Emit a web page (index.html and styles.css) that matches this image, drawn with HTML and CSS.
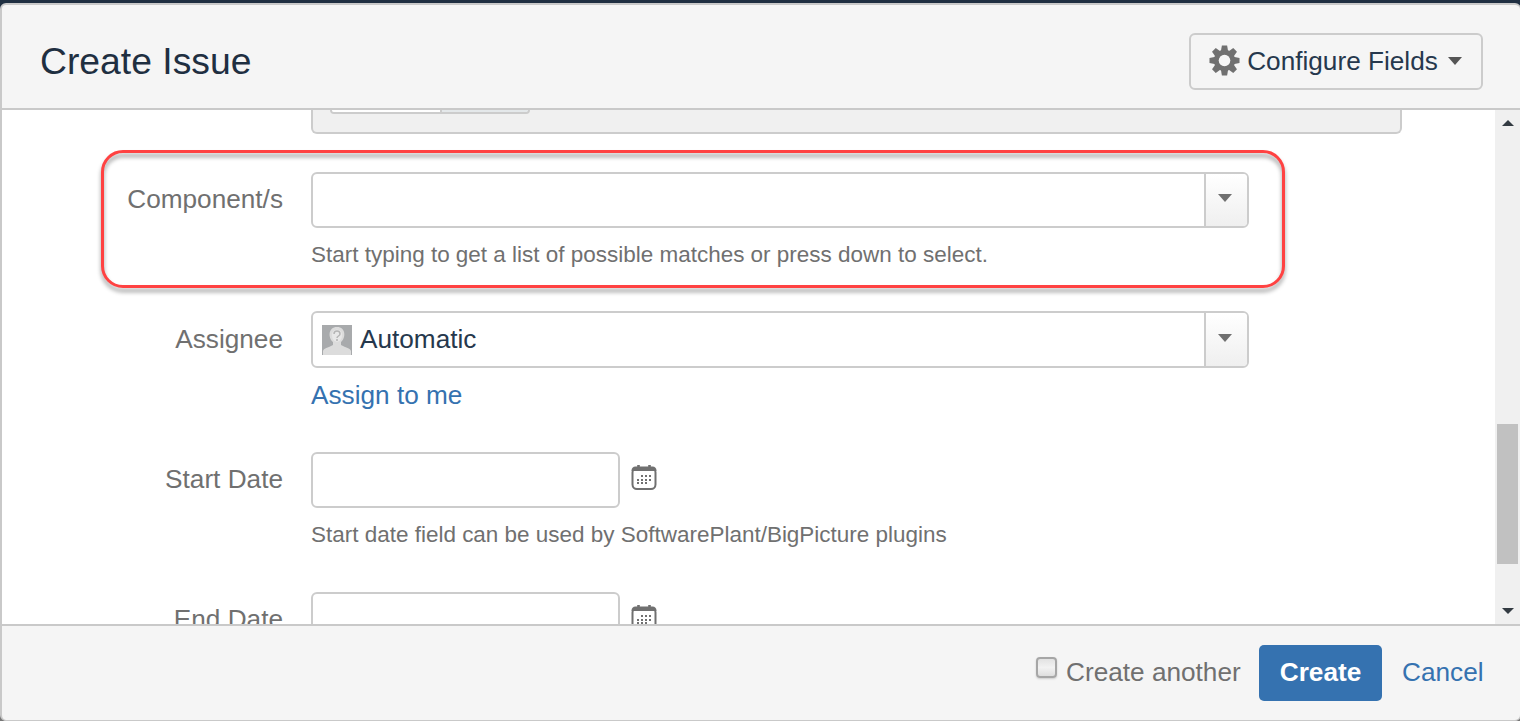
FILE: index.html
```html
<!DOCTYPE html>
<html lang="en">
<head>
<meta charset="utf-8">
<title>Create Issue</title>
<link rel="stylesheet" href="styles.css">
</head>
<body>
<svg class="defs" aria-hidden="true">
  <symbol id="calendar" viewBox="0 0 26 26">
    <path d="M7.500 0v4M18.500 0v4" stroke="#707070" stroke-width="2.600"/>
    <rect x="1.500" y="3" width="23" height="21" rx="4.500" fill="#fff" stroke="#707070" stroke-width="2"/>
    <path d="M.5 6c0-3 1.500-4.500 4-4.500h17c2.500 0 4 1.500 4 4.500z" fill="#707070"/>
    <path d="M10 11h10M6 15h14M6 18h10" stroke="#707070" stroke-width="2" stroke-dasharray="2 2"/>
  </symbol>
</svg>
<main class="dialog">
  <header class="dialog-header">
    <h1 class="title">Create Issue</h1>
    <button class="configure">
      <svg class="gear" viewBox="-16 -16 32 32">
        <g fill="#707070">
          <path id="teeth" d="M-3.800-9-2.700-15.500h5.400L3.800-9V9L2.700 15.500h-5.400L-3.800 9z"/>
          <use href="#teeth" transform="rotate(45)"/>
          <use href="#teeth" transform="rotate(90)"/>
          <use href="#teeth" transform="rotate(135)"/>
          <circle r="11"/>
        </g>
        <circle r="6" fill="#f5f5f5"/>
      </svg>
      <span class="configure-text">Configure Fields</span>
      <svg class="caret" viewBox="0 0 14 8"><path d="M0 0h14L7 8z" fill="#555"/></svg>
    </button>
  </header>
  <section class="dialog-body">
    <form class="fields">
      <div class="panel"><div class="tabs"><span class="tab active"></span><span class="tab"></span></div></div>
      <div class="row">
        <label class="label">Component/s</label>
        <div class="control">
          <div class="select"><span class="value"></span><span class="drop"><svg class="caret" viewBox="0 0 14 8"><path d="M0 0h14L7 8z" fill="#707070"/></svg></span></div>
          <p class="hint components-hint">Start typing to get a list of possible matches or press down to select.</p>
        </div>
        <div class="highlight"></div>
      </div>
      <div class="row">
        <label class="label">Assignee</label>
        <div class="control">
          <div class="select assignee-select"><span class="value">
            <svg class="avatar" viewBox="0 0 30 30">
              <rect width="30" height="30" fill="#a8aaac"/>
              <path d="M1 30v-4c1-3 4-3 8-5l2-1V17C6 13 6 2 15 2s9 11 4 15v3l2 1c4 2 7 2 8 5v4z" fill="#dcdcdc"/>
              <path d="M10 10c0-7 10-7 10 0 0 9-10 9-10 0z" fill="#e8e8e8"/>
              <path d="M12 9c0-4 6-4 6 0 0 2-3 2-3 4m0 1v2" fill="none" stroke="#b5b5b5" stroke-width="1.500"/>
            </svg>
            <span class="automatic">Automatic</span></span><span class="drop"><svg class="caret" viewBox="0 0 14 8"><path d="M0 0h14L7 8z" fill="#707070"/></svg></span></div>
          <a class="link assign">Assign to me</a>
        </div>
      </div>
      <div class="row">
        <label class="label">Start Date</label>
        <div class="control">
          <div class="date"><span class="input"></span><svg class="calendar"><use href="#calendar"/></svg></div>
          <p class="hint date-hint">Start date field can be used by SoftwarePlant/BigPicture plugins</p>
        </div>
      </div>
      <div class="row">
        <label class="label">End Date</label>
        <div class="control">
          <div class="date"><span class="input"></span><svg class="calendar"><use href="#calendar"/></svg></div>
        </div>
      </div>
    </form>
    <div class="scrollbar">
      <svg class="arrow" viewBox="0 0 12 6"><path d="M0 6h12L6 0z" fill="#333b42"/></svg>
      <span class="thumb"></span>
      <svg class="arrow" viewBox="0 0 12 6"><path d="M0 0h12L6 6z" fill="#333b42"/></svg>
    </div>
  </section>
  <footer class="dialog-footer">
    <span class="checkbox"></span>
    <span class="another">Create another</span>
    <button class="create"><span class="create-text">Create</span></button>
    <a class="link cancel">Cancel</a>
  </footer>
</main>
</body>
</html>
```
FILE: styles.css
```css
* { box-sizing: border-box; }
body {
  margin: 0;
  height: 721px;
  overflow: hidden;
  padding-top: 3px;
  background: linear-gradient(#1f2f41 0 20px, #777 20px);
  font-family: "Liberation Sans", Arial, sans-serif;
  font-size: 26.2px;
  line-height: 30px;
  color: #205081;
}
.defs { display: none; }
.dialog {
  width: 1521px;
  height: 718px;
  display: flex;
  flex-direction: column;
  overflow: hidden;
  border: 2px solid #c9c9c9;
  border-right-width: 1px;
  border-bottom-width: 1px;
  border-radius: 6px;
  background: #f5f5f5;
}
.dialog-header {
  height: 105px;
  flex: none;
  display: flex;
  align-items: center;
  justify-content: space-between;
  padding: 10px 37px 0 38px;
  border-bottom: 2px solid #c9c9c9;
}
.title { margin: 0 0 2px; font-size: 37.3px; font-weight: 400; line-height: 44px; color: #1f2f41; white-space: nowrap; }
.configure {
  width: 294px;
  height: 57px;
  display: flex;
  align-items: center;
  padding: 0 0 2px 18px;
  border: 2px solid #ccc;
  border-radius: 6px;
  background: #f5f5f5;
  color: #26384d;
  font: inherit;
  white-space: nowrap;
}
.gear { width: 31px; height: 31px; flex: none; margin-right: 7px; }
.configure-text { width: 191px; margin-right: 10px; }
.caret { width: 14px; height: 8px; flex: none; display: block; }
.dialog-body { height: 514px; flex: none; display: flex; background: #fff; overflow: hidden; }
.fields { flex: 1; margin: 0; overflow: hidden; }
.panel {
  width: 1091px;
  height: 24px;
  margin: 0 0 38px 309px;
  padding-left: 17px;
  border: 2px solid #ccc;
  border-top: 0;
  border-radius: 0 0 6px 6px;
  background: #f0f0f0;
}
.tabs { display: flex; width: 200px; height: 4px; border: 2px solid #ccc; border-top: 0; border-radius: 0 0 5px 5px; overflow: hidden; }
.tab { flex: 1; background: #e4e8ea; }
.tab.active { flex: none; width: 110px; background: #fff; border-right: 2px solid #ccc; }
.row { position: relative; display: flex; height: 140px; }
.label { width: 281px; margin-right: 28px; padding-top: 12px; text-align: right; color: #707070; white-space: nowrap; }
.select {
  width: 938px;
  height: 56px;
  display: flex;
  border: 2px solid #ccc;
  border-radius: 6px;
  overflow: hidden;
}
.assignee-select { height: 57px; margin-top: -1px; }
.value { flex: 1; display: flex; align-items: center; padding-left: 9px; color: #26384d; }
.avatar { width: 30px; height: 30px; margin-right: 8px; }
.automatic { margin-bottom: 2px; }
.drop {
  width: 43px;
  display: flex;
  align-items: center;
  padding: 0 0 4px 12px;
  border-left: 2px solid #ccc;
  background: linear-gradient(#fff, #efefef);
}
.hint { margin: 13px 0 0; font-size: 22.480px; line-height: 28px; color: #707070; white-space: nowrap; }
.link { color: #3572b0; }
.assign { display: block; margin-top: 12px; }
.date { display: flex; }
.input { width: 309px; height: 56px; border: 2px solid #ccc; border-radius: 6px; }
.calendar { width: 26px; height: 26px; margin: 13px 0 0 11px; }
.highlight {
  position: absolute;
  left: 99px;
  top: -22px;
  width: 1184px;
  height: 138px;
  border: 3px solid #ff4242;
  border-radius: 22px;
  filter: drop-shadow(0 4px 2px rgba(0, 0, 0, .4));
}
.scrollbar {
  width: 25px;
  flex: none;
  display: flex;
  flex-direction: column;
  align-items: center;
  padding: 10px 0;
  background: #f0f0f0;
}
.arrow { width: 12px; height: 6px; flex: none; }
.thumb { width: 21px; height: 140px; margin: 298px 0 44px; background: #c1c1c1; }
.dialog-footer { flex: 1; display: flex; align-items: flex-start; padding: 19px 0 0 1034px; border-top: 2px solid #c9c9c9; color: #707070; white-space: nowrap; }
.checkbox {
  width: 21px;
  height: 21px;
  margin: 12px 9px 0 0;
  border: 2px solid #a6a6a6;
  border-radius: 4px;
  background: linear-gradient(#e2e2e2, #f2f2f2 50%, #dedede);
  box-shadow: 0 1px 2px #ccc;
}
.another { width: 175px; margin: 12px 18px 0 0; }
.create {
  width: 123px;
  height: 56px;
  margin-right: 20px;
  padding: 0 0 2px;
  border: 0;
  border-radius: 5px;
  background: #3572b0;
  color: #fff;
  font: inherit;
  font-weight: 700;
}
.cancel { margin-top: 12px; }
```
